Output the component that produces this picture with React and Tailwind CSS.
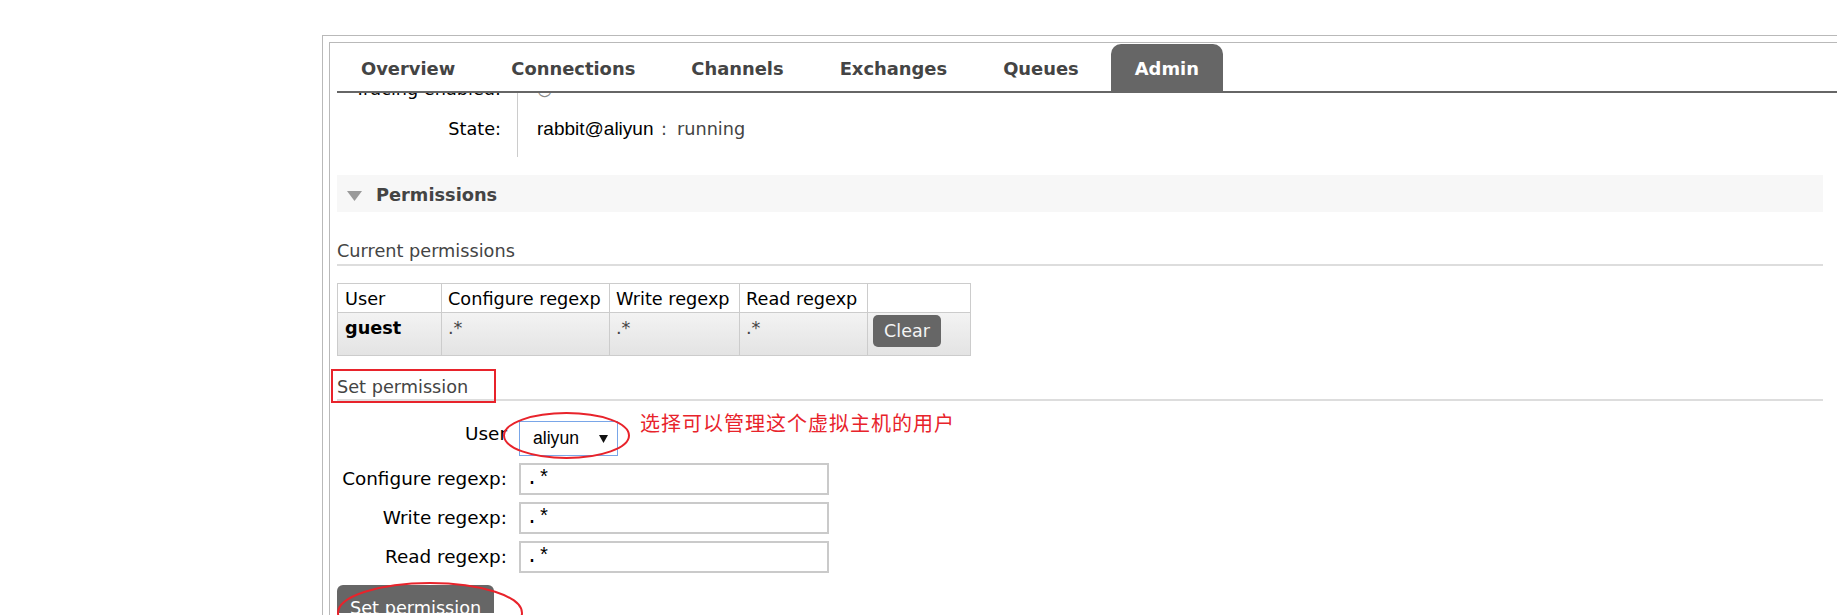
import React from "react";

const TABS = ["Overview", "Connections", "Channels", "Exchanges", "Queues", "Admin"];

const PERMISSIONS = [{ user: "guest", configure: ".*", write: ".*", read: ".*" }];

const REGEXP_FIELDS = ["Configure regexp:", "Write regexp:", "Read regexp:"];

const SectionTitle = ({ children, className }) => (
  <h3 className={`border-b-2 border-[#dddddd] text-[17.7px] font-normal leading-[24px] text-[#444] ${className}`}>
    {children}
  </h3>
);

const App = () => {
  return (
    <div className="relative h-[615px] w-[1837px] overflow-hidden bg-white font-['DejaVu_Sans',sans-serif] text-[17.7px] text-black">
      {/* outer + inner frame */}
      <div className="ml-[322px] mt-[35px] h-[600px] border-l border-t border-[#b9b9b9] pl-[6px] pt-[6px]">
        <div className="h-full border-l border-t border-[#b9b9b9] pl-[7px] pt-[1px]">
          <nav className="flex gap-2 border-b-2 border-[#666]">
            {TABS.map((tab) => (
              <div
                key={tab}
                className={
                  tab === "Admin"
                    ? "flex h-[47px] items-center rounded-t-[10px] bg-[#666] px-6 pt-[3px] text-[17.9px] font-bold text-white"
                    : "flex h-[47px] items-center px-6 pt-[3px] text-[17.9px] font-bold text-[#444]"
                }
              >
                {tab}
              </div>
            ))}
          </nav>

          <div className="h-[520px] overflow-hidden pr-[14px]">
            {/* node info, scrolled partly under the tab bar */}
            <div className="mt-[-24px] flex">
              <div className="w-[180px] pb-[8px] pr-[16px] text-right">
                <div className="h-[40px] leading-[40px]">Tracing enabled:</div>
                <div className="h-[40px] leading-[40px]">State:</div>
              </div>
              <div className="border-l border-[#cccccc] pb-[8px] pl-[19px]">
                <div className="h-[40px] leading-[40px] text-[#888]">○</div>
                <div className="flex h-[40px] leading-[40px]">
                  <span className="inline-block w-[124px] font-['Liberation_Sans',sans-serif] text-[19px]">rabbit@aliyun</span>
                  <span className="text-[#444]">:</span>
                  <span className="ml-[10px] text-[#444]">running</span>
                </div>
              </div>
            </div>

            {/* Permissions section header */}
            <div className="mt-[18px] flex h-[37px] items-center bg-[#f7f7f7] pl-[10px] pt-[4px] text-[17.8px] font-bold text-[#444]">
              <svg width="15" height="10" viewBox="0 0 15 10" className="mr-[14px]">
                <polygon points="0,0 15,0 7.5,10" fill="#9a9a9a" />
              </svg>
              Permissions
            </div>

            <SectionTitle className="mt-[27px] pb-[1px]">Current permissions</SectionTitle>

            <table className="mt-[17px] w-[633px] table-fixed border-collapse">
              <colgroup>
                <col className="w-[104px]" />
                <col className="w-[168px]" />
                <col className="w-[130px]" />
                <col className="w-[128px]" />
                <col className="w-[103px]" />
              </colgroup>
              <thead>
                <tr className="h-[29px] bg-white">
                  <th className="border border-[#cccccc] px-[7px] pt-[4px] text-left align-top font-normal leading-[22px]">User</th>
                  <th className="border border-[#cccccc] px-[6px] pt-[4px] text-left align-top font-normal leading-[22px]">Configure regexp</th>
                  <th className="border border-[#cccccc] px-[6px] pt-[4px] text-left align-top font-normal leading-[22px]">Write regexp</th>
                  <th className="border border-[#cccccc] px-[6px] pt-[4px] text-left align-top font-normal leading-[22px]">Read regexp</th>
                  <th className="border border-[#cccccc]"></th>
                </tr>
              </thead>
              <tbody>
                {PERMISSIONS.map((p) => (
                  <tr key={p.user} className="h-[43px] bg-gradient-to-b from-[#f3f3f3] to-[#e3e3e3]">
                    <td className="border border-[#cccccc] px-[7px] pt-[4px] align-top font-bold leading-[22px]">{p.user}</td>
                    <td className="border border-[#cccccc] px-[6px] pt-[4px] align-top leading-[22px] text-[#444]">{p.configure}</td>
                    <td className="border border-[#cccccc] px-[6px] pt-[4px] align-top leading-[22px] text-[#444]">{p.write}</td>
                    <td className="border border-[#cccccc] px-[6px] pt-[4px] align-top leading-[22px] text-[#444]">{p.read}</td>
                    <td className="border border-[#cccccc] pl-[5px] pt-[2px] align-top">
                      <button className="h-[32px] w-[68px] rounded-[5px] bg-[#666] text-[17.5px] leading-[32px] text-[#f4f4f4]">
                        Clear
                      </button>
                    </td>
                  </tr>
                ))}
              </tbody>
            </table>

            <SectionTitle className="mt-[19px]">Set permission</SectionTitle>

            {/* form */}
            <div className="mt-[20px] flex h-[35px] items-start">
              <div className="w-[170px] text-right text-[18.4px] leading-[26px]">User</div>
              <div className="ml-[12px] flex h-[35px] w-[99px] items-center border border-[#79a6e8] bg-white pl-[13px] pr-[9px]">
                <span className="font-['Liberation_Sans',sans-serif] text-[17.6px]">aliyun</span>
                <svg width="9" height="8" viewBox="0 0 9 8" className="ml-auto">
                  <polygon points="0,0 9,0 4.5,8" fill="#111" />
                </svg>
              </div>
            </div>
            {REGEXP_FIELDS.map((label) => (
              <div key={label} className="mt-[7px] flex h-[32px]">
                <div className="w-[170px] text-right text-[18.4px] leading-[32px]">{label}</div>
                <div className="ml-[12px] h-[32px] w-[310px] border-2 border-[#cacaca] bg-white pl-[5px] font-['Liberation_Mono',monospace] text-[20px] leading-[28px]">
                  .*
                </div>
              </div>
            ))}

            <button className="mt-[12px] rounded-[6px] bg-[#666] px-[13px] py-[12px] text-[17.7px] leading-[22px] text-white">
              Set permission
            </button>
          </div>
        </div>
      </div>

      {/* red annotations */}
      <div className="absolute left-[331px] top-[369px] h-[34px] w-[165px] border-2 border-[#e8232b]"></div>
      <svg className="pointer-events-none absolute left-0 top-0" width="1837" height="615">
        <ellipse cx="566.5" cy="435.5" rx="62.5" ry="22.5" fill="none" stroke="#e8232b" strokeWidth="2" />
        <ellipse cx="430" cy="613" rx="92" ry="30" fill="none" stroke="#e8232b" strokeWidth="2" />
      </svg>
      <div className="absolute left-[640px] top-[411px] w-[314px] whitespace-nowrap text-justify font-['Noto_Sans_CJK_SC',serif] text-[20px] leading-[24px] text-[#e8232b] [text-align-last:justify]">
        选择可以管理这个虚拟主机的用户
      </div>
    </div>
  );
};

export default App;
